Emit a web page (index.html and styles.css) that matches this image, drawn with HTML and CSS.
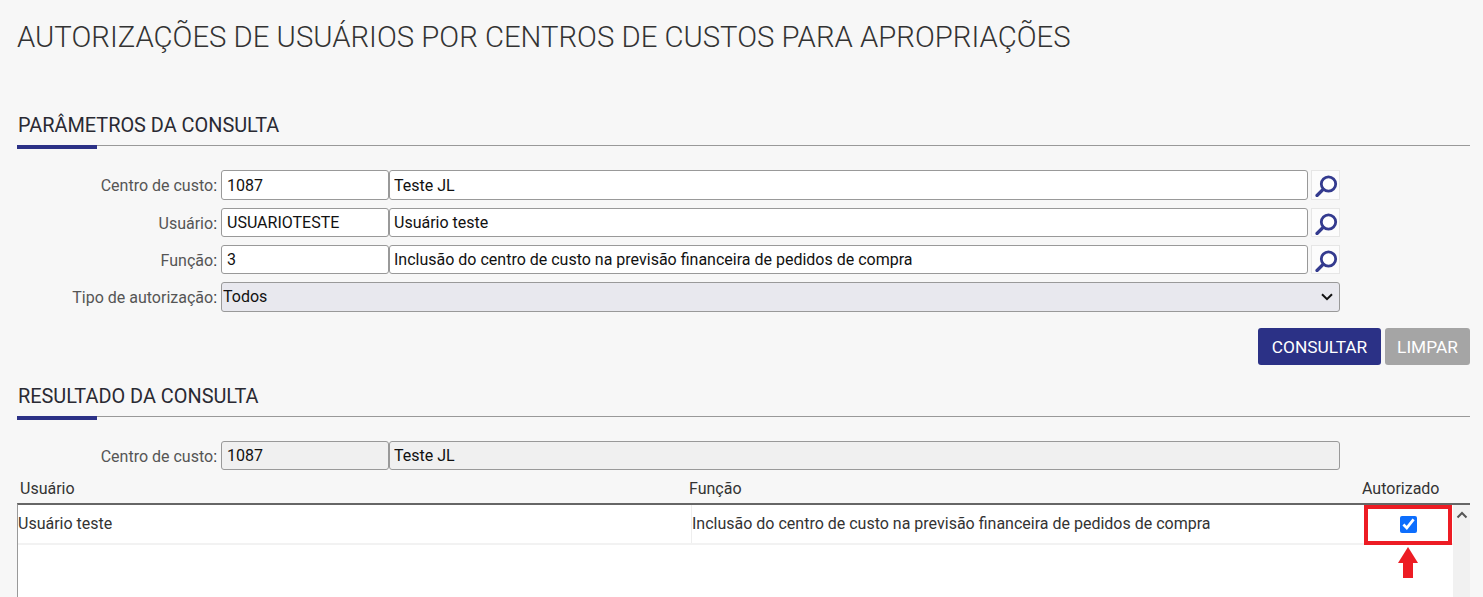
FILE: index.html
```html
<!DOCTYPE html>
<html lang="pt-BR">
<head>
    <meta charset="UTF-8">
    <title>Autorizações de usuários por centros de custos</title>
    <link rel="stylesheet" href="styles.css">
</head>
<body>
    <svg class="sprite" width="0" height="0">
        <symbol id="lupa" viewBox="0 0 24 24">
            <circle cx="14.5" cy="11" r="7.2" fill="#fff" stroke="#343b8f" stroke-width="2.8"/>
            <path d="M9 16.5 L3 22.5" fill="none" stroke="#343b8f" stroke-width="3.2" stroke-linecap="round"/>
        </symbol>
    </svg>

    <h1 class="page-title">AUTORIZAÇÕES DE USUÁRIOS POR CENTROS DE CUSTOS PARA APROPRIAÇÕES</h1>

    <!-- Parametros -->
    <h2 class="section-title section-first">PARÂMETROS DA CONSULTA</h2>
    <div class="form-rows">
        <div class="form-row row-tall">
            <label class="form-label">Centro de custo<span class="colon">:</span></label>
            <input class="field field-code" type="text" value="1087">
            <input class="field field-desc" type="text" value="Teste JL">
            <span class="lookup"><svg width="24" height="24"><use href="#lupa"/></svg></span>
        </div>
        <div class="form-row">
            <label class="form-label">Usuário<span class="colon">:</span></label>
            <input class="field field-code" type="text" value="USUARIOTESTE">
            <input class="field field-desc" type="text" value="Usuário teste">
            <span class="lookup"><svg width="24" height="24"><use href="#lupa"/></svg></span>
        </div>
        <div class="form-row">
            <label class="form-label">Função<span class="colon">:</span></label>
            <input class="field field-code" type="text" value="3">
            <input class="field field-desc" type="text" value="Inclusão do centro de custo na previsão financeira de pedidos de compra">
            <span class="lookup"><svg width="24" height="24"><use href="#lupa"/></svg></span>
        </div>
        <div class="form-row row-tall">
            <label class="form-label">Tipo de autorização<span class="colon">:</span></label>
            <div class="select-wrap">
                <select class="field field-select">
                    <option>Todos</option>
                </select>
                <svg class="select-arrow" width="12" height="8" viewBox="0 0 12 8"><path d="M1 1.2 L6 6.2 L11 1.2" fill="none" stroke="#111" stroke-width="2"/></svg>
            </div>
        </div>
    </div>

    <div class="actions">
        <button class="btn btn-primary">CONSULTAR</button>
        <button class="btn btn-disabled">LIMPAR</button>
    </div>

    <!-- Resultado -->
    <h2 class="section-title">RESULTADO DA CONSULTA</h2>
    <div class="form-row row-result">
        <label class="form-label">Centro de custo<span class="colon">:</span></label>
        <input class="field field-code readonly" type="text" value="1087" readonly>
        <input class="field field-wide readonly" type="text" value="Teste JL" readonly>
    </div>

    <div class="grid-head">
        <span class="col-user">Usuário</span>
        <span class="col-func">Função</span>
        <span class="col-auth">Autorizado</span>
    </div>
    <div class="grid-body">
        <div class="grid-rows">
            <div class="grid-row">
                <span class="cell-user">Usuário teste</span>
                <span class="cell-func">Inclusão do centro de custo na previsão financeira de pedidos de compra</span>
                <span class="cell-auth"><input type="checkbox" class="check" checked></span>
            </div>
        </div>
        <div class="scrollbar">
            <svg width="12" height="8" viewBox="0 0 12 8"><path d="M1.5 6.5 L6 2 L10.5 6.5" fill="none" stroke="#555" stroke-width="2"/></svg>
        </div>
        <!-- Marcacao em vermelho -->
        <div class="mark-box"></div>
        <svg class="mark-arrow" width="20" height="31" viewBox="0 0 20 31"><path d="M10 0 L20 16 L15 16 L15 31 L5 31 L5 16 L0 16 Z" fill="#ed1c24"/></svg>
    </div>
</body>
</html>
```

FILE: styles.css
```css
html, body {
    height: 597px;
    overflow: hidden;
}
body {
    margin: 0;
    padding: 0 13px 0 17px;
    background: #f7f7f7;
    font-family: Roboto, Arial, sans-serif;
    font-size: 16px;
    color: #333;
}
.sprite {
    display: block;
}
.page-title {
    margin: 0;
    padding-top: 19px;
    height: 36px;
    line-height: 36px;
    font-size: 29.3px;
    font-weight: 300;
    color: #333;
}
.section-title {
    position: relative;
    margin: 0;
    height: 38px;
    line-height: 37px;
    padding-left: 1px;
    font-size: 19.9px;
    font-weight: 400;
    color: #2a2a33;
    border-bottom: 1px solid #999;
}
.section-title::after {
    content: "";
    position: absolute;
    left: 0;
    bottom: -4px;
    width: 80px;
    height: 4px;
    background: #2b3186;
}
.section-first {
    margin-top: 52px;
}
.form-rows {
    margin-top: 24px;
}
.form-row {
    display: flex;
    align-items: stretch;
    height: 29px;
    margin-bottom: 8px;
}
.row-tall {
    height: 30px;
}
.form-label {
    width: 200px;
    flex: none;
    text-align: right;
    line-height: 31px;
    color: #555;
}
.colon {
    color: #333;
}
.field {
    box-sizing: border-box;
    height: 100%;
    margin: 0;
    border: 1px solid #999;
    border-radius: 3px;
    background: #fff;
    font-family: Roboto, Arial, sans-serif;
    font-size: 16px;
    color: #111;
    padding: 0 4px;
    outline: none;
}
.field-code {
    width: 168px;
    margin-left: 4px;
    padding: 0 5px;
}
.field-desc {
    width: 919px;
}
.field-wide {
    width: 951px;
}
.select-wrap {
    position: relative;
    width: 1119px;
    margin-left: 4px;
}
.field-select {
    appearance: none;
    width: 100%;
    padding: 0 0 2px 1px;
    background: #e8e8ee;
}
.select-arrow {
    position: absolute;
    right: 7px;
    top: 11px;
}
.readonly {
    background: #f0f0f0;
}
.lookup {
    display: flex;
    align-items: center;
    justify-content: center;
    box-sizing: border-box;
    width: 29px;
    margin-left: 3px;
    background: #fcfcfc;
    border: 1px solid #e6e6e6;
}
.actions {
    display: flex;
    justify-content: flex-end;
    gap: 4px;
    margin-top: 16px;
}
.btn {
    height: 37px;
    border: none;
    border-radius: 3px;
    color: #fff;
    font-family: Roboto, Arial, sans-serif;
    font-size: 17.3px;
    padding: 0;
}
.btn-primary {
    width: 123px;
    background: #2b3186;
}
.btn-disabled {
    width: 85px;
    background: #a5a5a5;
}
.section-title:not(.section-first) {
    margin-top: 13px;
}
.row-result {
    margin-top: 24px;
    margin-bottom: 0;
}
.grid-head {
    display: flex;
    height: 33px;
    line-height: 38px;
    color: #333;
}
.col-user {
    margin-left: 3px;
    width: 669px;
}
.col-func {
    width: 673px;
}
.grid-body {
    position: relative;
    display: flex;
    height: 92px;
    border-top: 2px solid #666;
    border-left: 1px solid #999;
    background: #fff;
}
.grid-rows {
    flex: 1;
}
.grid-row {
    display: flex;
    box-sizing: border-box;
    height: 40px;
    border-bottom: 2px solid #f2f2f2;
    line-height: 37px;
}
.cell-user {
    width: 674px;
    box-sizing: border-box;
    border-right: 1px solid #eee;
}
.cell-func {
    width: 671px;
    box-sizing: border-box;
}
.cell-auth {
    flex: 1;
    display: flex;
    justify-content: center;
    align-items: center;
}
.check {
    width: 17px;
    height: 17px;
    margin: 1px 0 0 0;
    accent-color: #0d6efd;
}
.scrollbar {
    width: 17px;
    background: #f1f1f1;
    text-align: center;
    line-height: 17px;
}
.mark-box {
    position: absolute;
    left: 1346px;
    top: 0;
    width: 88px;
    height: 40px;
    box-sizing: border-box;
    border: 4px solid #ed1c24;
}
.mark-arrow {
    position: absolute;
    left: 1380px;
    top: 42px;
}
```
